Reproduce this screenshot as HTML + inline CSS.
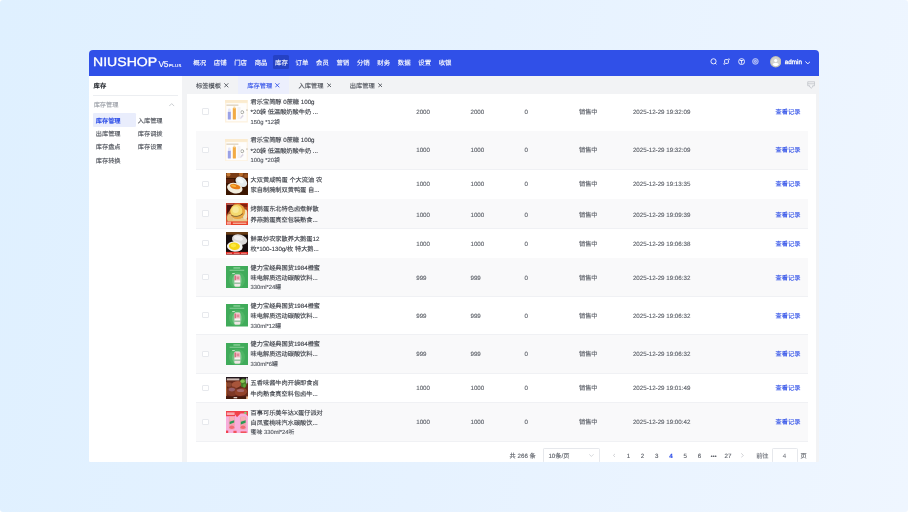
<!DOCTYPE html>
<html lang="zh-CN"><head><meta charset="utf-8"><title>库存管理</title>
<style>
*{box-sizing:border-box;margin:0;padding:0}
html,body{width:908px;height:512px;overflow:hidden}
body{background:#fff;font-family:"Liberation Sans","Noto Sans CJK SC",sans-serif;font-size:6.2px;color:#4b4f57;position:relative;-webkit-text-size-adjust:none;text-rendering:geometricPrecision}
.a{position:absolute;white-space:nowrap;line-height:10px}
div.a{padding-top:1.3px;-webkit-text-stroke:0.12px currentColor}
#app{will-change:transform;position:absolute;left:89px;top:50px;width:730px;height:411.8px;border-radius:4px 4px 1.5px 1.5px;overflow:hidden;background:#f2f3f5}
#hd{position:absolute;z-index:2;left:0;top:0;width:730px;height:25.75px;background:#3050e8}
#sb{position:absolute;left:0;top:25.6px;width:92.8px;height:387px;background:#fff}
#card{position:absolute;left:98.2px;top:44.15px;width:628.8px;height:368px;background:#fff}
.nav{color:#fff;font-size:6.4px;top:7.3px}
.tab{font-size:6.25px;top:30.5px;color:#4b4f57}
.x{font-size:6.6px}
.row{position:absolute;left:107.4px;width:611.2px}
.odd{background:#fff}.even{background:#f9f9fa}
.row:after{content:"";position:absolute;left:0;right:0;bottom:0;height:0.5px;background:#f0f1f4}
.cb{position:absolute;left:6.2px;width:6.4px;height:6.4px;border:0.5px solid #e7e9ed;border-radius:1px;background:#fff}
.th{position:absolute;left:29.6px}
.th svg{display:block}
.t{color:#3d4048}
.s{color:#50545c;font-size:5.85px}
.lk{color:#3050e8}
.m{color:#5c6068}
.pg{top:400.6px;color:#5c6068}
</style></head><body>
<div style="position:absolute;left:0;top:0;width:908px;height:512px;border-radius:3px;background:linear-gradient(100deg,#dff0ff 0%,#e6f2ff 50%,#eff6ff 100%)"></div>
<div id="app">
<div id="hd">
<div class="a" style="left:3.8px;top:3.4px;font-size:12.4px;line-height:14px;color:#fff;-webkit-text-stroke:0.3px #fff;transform:scaleX(1.136);transform-origin:0 50%">NIUSHOP</div>
<div class="a" style="left:69.4px;top:7.3px;font-size:8.5px;line-height:10px;color:#fff;letter-spacing:-0.4px">V5</div>
<div class="a" style="left:79.9px;top:11.3px;font-size:4.2px;line-height:5px;color:#fff;letter-spacing:0.45px;-webkit-text-stroke:0.15px #fff">PLUS</div>

<div class="a" style="left:183.8px;top:5.2px;width:16.6px;height:13.6px;background:#2541c4;border-radius:1.5px"></div>
<div class="a nav" style="left:104.30px">概况</div>
<div class="a nav" style="left:124.75px">店铺</div>
<div class="a nav" style="left:145.20px">门店</div>
<div class="a nav" style="left:165.65px">商品</div>
<div class="a nav" style="left:186.10px">库存</div>
<div class="a nav" style="left:206.55px">订单</div>
<div class="a nav" style="left:227.00px">会员</div>
<div class="a nav" style="left:247.45px">营销</div>
<div class="a nav" style="left:267.90px">分销</div>
<div class="a nav" style="left:288.35px">财务</div>
<div class="a nav" style="left:308.80px">数据</div>
<div class="a nav" style="left:329.25px">设置</div>
<div class="a nav" style="left:349.70px">收银</div>
<svg class="a" style="left:620.6px;top:8.1px" width="7.4" height="7.4" viewBox="0 0 16 16" fill="none" stroke="#fff" stroke-width="1.9"><circle cx="7.6" cy="7.2" r="5.6"/><path d="M11.8 11.6 L13.6 13.4" stroke-linecap="round"/></svg>
<svg class="a" style="left:634.4px;top:8.4px" width="7.2" height="7.2" viewBox="0 0 16 16" fill="none" stroke="#fff" stroke-width="2.2" opacity=".92"><rect x="3.6" y="3.6" width="8.4" height="8.4" rx="1.6"/><path d="M11.6 2 H14 V4.6 M4.4 14 H2 V11.4" stroke-width="1.8"/></svg>
<svg class="a" style="left:648.9px;top:8.1px" width="7.2" height="7.2" viewBox="0 0 16 16" fill="none" stroke="#fff" stroke-width="1.9"><circle cx="8" cy="8" r="6.6"/><path d="M5 5.6 H11 M8 5.6 V12" stroke-linecap="round"/></svg>
<svg class="a" style="left:663.4px;top:8.2px" width="6.8" height="6.8" viewBox="0 0 16 16" fill="rgba(255,255,255,.38)" stroke="#fff" stroke-width="1.6" opacity=".8"><circle cx="8" cy="8" r="6.8"/><circle cx="8" cy="8" r="2.2" fill="none"/></svg>
<svg class="a" style="left:680.9px;top:6.3px" width="11.4" height="11.4" viewBox="0 0 24 24"><circle cx="12" cy="12" r="12" fill="#c2c1b6"/><circle cx="12" cy="12" r="9.8" fill="#d2d2d0"/><circle cx="12" cy="9.6" r="3.3" fill="#fff"/><path d="M5.6 18.6 C6.2 15.6 8.8 14.2 12 14.2 S17.8 15.6 18.4 18.6 A9.8 9.8 0 0 1 5.6 18.6Z" fill="#fff"/></svg>
<div class="a" style="left:695.8px;top:7.2px;font-size:6.3px;color:#fff;-webkit-text-stroke:0.3px #fff">admin</div>
<svg class="a" style="left:715.8px;top:10.6px" width="5.6" height="3.6" viewBox="0 0 10 6" fill="none" stroke="#fff" stroke-width="1.7"><path d="M1 1 L5 5 L9 1" stroke-linecap="round" stroke-linejoin="round"/></svg>
</div>
<div id="sb">
<div class="a" style="left:4.6px;top:5.2px;font-size:6.3px;font-weight:bold;color:#1f2329">库存</div>
<div class="a" style="left:4.4px;top:19.6px;width:84.4px;height:0.6px;background:#eceef1"></div>
<div class="a" style="left:4.7px;top:24.2px;color:#9a9ea6">库存管理</div>
<svg class="a" style="left:80.4px;top:27.8px" width="5.4" height="3.4" viewBox="0 0 10 6" fill="none" stroke="#a7abb2" stroke-width="1.1"><path d="M1 5 L5 1 L9 5" stroke-linecap="round" stroke-linejoin="round"/></svg>
<div class="a" style="left:4.2px;top:37.9px;width:42.4px;height:13.2px;background:#e9edfc;border-radius:1.2px"></div>
<div class="a" style="left:6.8px;top:39.7px;font-weight:bold;color:#3050e8">库存管理</div>
<div class="a" style="left:48.8px;top:39.7px">入库管理</div>
<div class="a" style="left:6.8px;top:52.9px">出库管理</div>
<div class="a" style="left:48.8px;top:52.9px">库存调拨</div>
<div class="a" style="left:6.8px;top:66.1px">库存盘点</div>
<div class="a" style="left:48.8px;top:66.1px">库存设置</div>
<div class="a" style="left:6.8px;top:79.8px">库存转换</div>
</div>

<div id="card"></div>
<div class="row odd" style="top:42.90px;height:38.40px">
<div class="cb" style="left:5.9px;top:15.6px"></div>
<div class="th" style="left:28.9px;top:7.55px"><svg viewBox="0 0 22.8 22.6" width="22.8" height="22.6"><defs><filter id="bT10" x="-10%" y="-10%" width="120%" height="120%"><feGaussianBlur stdDeviation="0.35"/></filter><clipPath id="cT10"><rect width="22.8" height="22.6"/></clipPath></defs><g clip-path="url(#cT10)"><g filter="url(#bT10)"><rect x="-2" y="-2" width="27" height="27" fill="#fdf2df"/><rect x="-2" y="-2" width="27" height="4.8" fill="#fbebcf"/><rect x="1.3" y="3.2" width="20.4" height="18" fill="#fefdfc"/><rect x="1.4" y="4.7" width="12" height="0.8" fill="#c8b594"/><rect x="2.8" y="11.4" width="3" height="8.2" rx="0.5" fill="#9aa1e6"/><rect x="3" y="8.6" width="2.6" height="3.2" rx="1" fill="#e4e6f7"/><rect x="7.8" y="8" width="3.1" height="11.6" rx="0.5" fill="#f2ab45"/><rect x="8.2" y="6.6" width="2.3" height="2" rx="0.8" fill="#f8d9a4"/><circle cx="17.2" cy="12.2" r="1.5" fill="none" stroke="#94968f" stroke-width="0.8"/><path d="M15 18.8 L18.2 15.4" stroke="#dcd6e4" stroke-width="1.6"/><rect x="21.3" y="9.7" width="1.4" height="0.7" fill="#8f8268"/><rect x="12.5" y="7" width="3" height="12" fill="#f4f3f4"/></g></g></svg></div>
<div class="a t" style="left:54.2px;top:4.10px">君乐宝简醇 0蔗糖 100g</div>
<div class="a t" style="left:54.2px;top:14.10px">*20袋 低温酸奶酸牛奶 ...</div>
<div class="a s" style="left:54.2px;top:24.10px">150g *12袋</div>
<div class="a m" style="left:219.8px;top:14.10px">2000</div>
<div class="a m" style="left:274.1px;top:14.10px">2000</div>
<div class="a m" style="left:328.2px;top:14.10px">0</div>
<div class="a m" style="left:382.6px;top:14.10px">销售中</div>
<div class="a m" style="left:436.5px;top:14.10px">2025-12-29 19:32:09</div>
<div class="a lk" style="left:579.2px;top:14.10px">查看记录</div>
</div>
<div class="row even" style="top:81.30px;height:38.40px">
<div class="cb" style="left:5.9px;top:15.6px"></div>
<div class="th" style="left:28.9px;top:7.55px"><svg viewBox="0 0 22.8 22.6" width="22.8" height="22.6"><defs><filter id="bT11" x="-10%" y="-10%" width="120%" height="120%"><feGaussianBlur stdDeviation="0.35"/></filter><clipPath id="cT11"><rect width="22.8" height="22.6"/></clipPath></defs><g clip-path="url(#cT11)"><g filter="url(#bT11)"><rect x="-2" y="-2" width="27" height="27" fill="#fdf2df"/><rect x="-2" y="-2" width="27" height="4.8" fill="#fbebcf"/><rect x="1.3" y="3.2" width="20.4" height="18" fill="#fefdfc"/><rect x="1.4" y="4.7" width="12" height="0.8" fill="#c8b594"/><rect x="2.8" y="11.4" width="3" height="8.2" rx="0.5" fill="#9aa1e6"/><rect x="3" y="8.6" width="2.6" height="3.2" rx="1" fill="#e4e6f7"/><rect x="7.8" y="8" width="3.1" height="11.6" rx="0.5" fill="#f2ab45"/><rect x="8.2" y="6.6" width="2.3" height="2" rx="0.8" fill="#f8d9a4"/><circle cx="17.2" cy="12.2" r="1.5" fill="none" stroke="#94968f" stroke-width="0.8"/><path d="M15 18.8 L18.2 15.4" stroke="#dcd6e4" stroke-width="1.6"/><rect x="21.3" y="9.7" width="1.4" height="0.7" fill="#8f8268"/><rect x="12.5" y="7" width="3" height="12" fill="#f4f3f4"/></g></g></svg></div>
<div class="a t" style="left:54.2px;top:3.70px">君乐宝简醇 0蔗糖 100g</div>
<div class="a t" style="left:54.2px;top:14.70px">*20袋 低温酸奶酸牛奶 ...</div>
<div class="a s" style="left:54.2px;top:23.70px">100g *20袋</div>
<div class="a m" style="left:219.8px;top:13.70px">1000</div>
<div class="a m" style="left:274.1px;top:13.70px">1000</div>
<div class="a m" style="left:328.2px;top:13.70px">0</div>
<div class="a m" style="left:382.6px;top:13.70px">销售中</div>
<div class="a m" style="left:436.5px;top:13.70px">2025-12-29 19:32:09</div>
<div class="a lk" style="left:579.2px;top:13.70px">查看记录</div>
</div>
<div class="row odd" style="top:119.70px;height:29.40px">
<div class="cb" style="left:5.9px;top:11.1px"></div>
<div class="th" style="left:29.6px;top:3.35px"><svg viewBox="0 0 22 22" width="22" height="22"><defs><filter id="bT32" x="-10%" y="-10%" width="120%" height="120%"><feGaussianBlur stdDeviation="0.45"/></filter><clipPath id="cT32"><rect width="22" height="22"/></clipPath></defs><g clip-path="url(#cT32)"><g filter="url(#bT32)"><rect x="-2" y="-2" width="26" height="26" fill="#3a1406"/><rect x="-2" y="-2" width="26" height="7" fill="#7a3d17"/><circle cx="2.5" cy="1.5" r="2" fill="#c27a34"/><circle cx="15" cy="1" r="2.2" fill="#b86a28"/><circle cx="20" cy="3" r="2" fill="#9a5420"/><rect x="0" y="6" width="8" height="4" fill="#5a240c"/><ellipse cx="15.3" cy="8.8" rx="6.4" ry="4.5" transform="rotate(35 15.3 8.8)" fill="#e4ebec"/><ellipse cx="14.3" cy="7.6" rx="3.6" ry="2" transform="rotate(35 14.3 7.6)" fill="#f4f8f8"/><ellipse cx="8.8" cy="15.1" rx="7.9" ry="5.2" transform="rotate(14 8.8 15.1)" fill="#f2ecdc"/><ellipse cx="9.2" cy="13.6" rx="5.3" ry="2.5" transform="rotate(14 9.2 13.6)" fill="#e77b18"/><ellipse cx="7.6" cy="12.8" rx="2.6" ry="1.1" transform="rotate(14 7.6 12.8)" fill="#f6b236"/></g></g></svg></div>
<div class="a t" style="left:54.2px;top:5.30px">大双黄咸鸭蛋 个大流油 农</div>
<div class="a t" style="left:54.2px;top:15.30px">家自制腌制双黄鸭蛋 自...</div>
<div class="a m" style="left:219.8px;top:9.30px">1000</div>
<div class="a m" style="left:274.1px;top:9.30px">1000</div>
<div class="a m" style="left:328.2px;top:9.30px">0</div>
<div class="a m" style="left:382.6px;top:9.30px">销售中</div>
<div class="a m" style="left:436.5px;top:9.30px">2025-12-29 19:13:35</div>
<div class="a lk" style="left:579.2px;top:9.30px">查看记录</div>
</div>
<div class="row even" style="top:149.10px;height:29.90px">
<div class="cb" style="left:5.9px;top:11.4px"></div>
<div class="th" style="left:29.6px;top:3.60px"><svg viewBox="0 0 22 22" width="22" height="22"><defs><filter id="bT43" x="-10%" y="-10%" width="120%" height="120%"><feGaussianBlur stdDeviation="0.45"/></filter><clipPath id="cT43"><rect width="22" height="22"/></clipPath></defs><g clip-path="url(#cT43)"><g filter="url(#bT43)"><rect x="-2" y="-2" width="26" height="26" fill="#b06a34"/><path d="M-2 -2 H10 L0 13 H-2Z" fill="#4a0e07"/><rect x="14" y="-2" width="10" height="8" fill="#86200f"/><rect x="18" y="4" width="6" height="16" fill="#a4421c"/><ellipse cx="12" cy="17.5" rx="10" ry="3.6" fill="#e9c98c"/><ellipse cx="4" cy="15" rx="3" ry="4" fill="#e8c07c"/><ellipse cx="19.2" cy="11.5" rx="2.4" ry="5" fill="#efe2bc"/><circle cx="11.6" cy="8.6" r="7.5" fill="#e8a640"/><circle cx="10.4" cy="7.8" r="5.9" fill="#f4da70"/><circle cx="9.6" cy="6.8" r="3.2" fill="#f8e898"/><path d="M5.2 12.2 Q11 15.4 17 10.6" stroke="#7a5a30" stroke-width="0.9" fill="none"/></g><rect x="0.25" y="0.25" width="21.5" height="21.5" fill="none" stroke="#e8412a" stroke-width="0.7"/><rect x="0" y="18.4" width="22" height="3.6" fill="#e8412a"/><rect x="0.8" y="18.6" width="4.2" height="3" fill="#f5a093"/><rect x="6.8" y="19.6" width="13.6" height="1.3" fill="#f6b59c"/><rect x="0.6" y="0.7" width="7" height="0.9" fill="#ef8d7c"/></g></svg></div>
<div class="a t" style="left:54.2px;top:4.90px">烤鹅蛋东北特色卤煮鲜散</div>
<div class="a t" style="left:54.2px;top:15.90px">养燕鹅蛋真空包装熟食...</div>
<div class="a m" style="left:219.8px;top:10.90px">1000</div>
<div class="a m" style="left:274.1px;top:10.90px">1000</div>
<div class="a m" style="left:328.2px;top:10.90px">0</div>
<div class="a m" style="left:382.6px;top:10.90px">销售中</div>
<div class="a m" style="left:436.5px;top:10.90px">2025-12-29 19:09:39</div>
<div class="a lk" style="left:579.2px;top:10.90px">查看记录</div>
</div>
<div class="row odd" style="top:179.00px;height:29.30px">
<div class="cb" style="left:5.9px;top:11.1px"></div>
<div class="th" style="left:29.6px;top:3.00px"><svg viewBox="0 0 22 22.6" width="22" height="22.6"><defs><filter id="bT54" x="-10%" y="-10%" width="120%" height="120%"><feGaussianBlur stdDeviation="0.45"/></filter><clipPath id="cT54"><rect width="22" height="22.6"/></clipPath></defs><g clip-path="url(#cT54)"><g filter="url(#bT54)"><rect x="-2" y="-2" width="26" height="27" fill="#160b07"/><rect x="-2" y="-2" width="26" height="5" fill="#4e2a10"/><rect x="-2" y="0.4" width="26" height="1.2" fill="#7a4a20"/><ellipse cx="13.6" cy="7.6" rx="7.8" ry="5" transform="rotate(16 13.6 7.6)" fill="#dbd9d8"/><ellipse cx="12.4" cy="6.2" rx="4.6" ry="2.2" transform="rotate(16 12.4 6.2)" fill="#efeeee"/><ellipse cx="8.8" cy="14.6" rx="7.9" ry="5.1" transform="rotate(6 8.8 14.6)" fill="#f3f3f1"/><ellipse cx="8.4" cy="14.3" rx="5.5" ry="3.7" transform="rotate(6 8.4 14.3)" fill="#f5d714"/><ellipse cx="7.4" cy="13.6" rx="2.8" ry="1.8" fill="#fbe944"/></g><rect y="19.9" width="22" height="2.8" fill="#de1f19"/><rect x="0.8" y="20.8" width="5.2" height="0.9" fill="#f4a39b"/><rect x="7.8" y="20.8" width="5.8" height="0.9" fill="#f4a39b"/><rect x="15" y="20.8" width="5.8" height="0.9" fill="#f4a39b"/></g></svg></div>
<div class="a t" style="left:54.2px;top:5.00px">鲜果妙农家散养大鹅蛋12</div>
<div class="a t" style="left:54.2px;top:15.00px">枚*100-130g/枚 特大鹅...</div>
<div class="a m" style="left:219.8px;top:10.00px">1000</div>
<div class="a m" style="left:274.1px;top:10.00px">1000</div>
<div class="a m" style="left:328.2px;top:10.00px">0</div>
<div class="a m" style="left:382.6px;top:10.00px">销售中</div>
<div class="a m" style="left:436.5px;top:10.00px">2025-12-29 19:06:38</div>
<div class="a lk" style="left:579.2px;top:10.00px">查看记录</div>
</div>
<div class="row even" style="top:208.30px;height:38.30px">
<div class="cb" style="left:5.9px;top:15.6px"></div>
<div class="th" style="left:29.6px;top:7.50px"><svg viewBox="0 0 22 22.6" width="22" height="22.6"><defs><filter id="bT65" x="-10%" y="-10%" width="120%" height="120%"><feGaussianBlur stdDeviation="0.4"/></filter><clipPath id="cT65"><rect width="22" height="22.6"/></clipPath></defs><g clip-path="url(#cT65)"><g filter="url(#bT65)"><rect x="-2" y="-2" width="26" height="27" fill="#41ab5a"/><ellipse cx="11" cy="14" rx="8" ry="8" fill="#4fb566"/><ellipse cx="11" cy="14.5" rx="4.8" ry="6.6" fill="#72c584"/><rect x="7.4" y="1.3" width="6.8" height="1.3" fill="#8fd49d"/><rect x="3.6" y="3.8" width="14.6" height="0.8" fill="#9ad9a7"/><rect x="6.2" y="7.1" width="2.6" height="0.8" fill="#d4f0da"/><rect x="8.6" y="8.4" width="5.6" height="12.2" rx="1" fill="#f0e0e0"/><rect x="8.6" y="9.4" width="5.6" height="5.2" fill="#ecbcc4"/><rect x="8.6" y="9.6" width="1.3" height="4.8" fill="#d4677a"/><rect x="10.6" y="10.6" width="2.6" height="2.6" fill="#e08a98"/><rect x="8.6" y="14.6" width="5.6" height="2" fill="#f8f6f4"/><rect x="8.6" y="16.7" width="5.6" height="1" fill="#5aa870"/><rect x="8.6" y="17.8" width="5.6" height="2.5" fill="#f0e6e6"/></g></g></svg></div>
<div class="a t" style="left:54.2px;top:4.70px">健力宝经典国货1984橙蜜</div>
<div class="a t" style="left:54.2px;top:14.70px">味电解质运动碳酸饮料...</div>
<div class="a s" style="left:54.2px;top:23.70px">330ml*24罐</div>
<div class="a m" style="left:219.8px;top:14.70px">999</div>
<div class="a m" style="left:274.1px;top:14.70px">999</div>
<div class="a m" style="left:328.2px;top:14.70px">0</div>
<div class="a m" style="left:382.6px;top:14.70px">销售中</div>
<div class="a m" style="left:436.5px;top:14.70px">2025-12-29 19:06:32</div>
<div class="a lk" style="left:579.2px;top:14.70px">查看记录</div>
</div>
<div class="row odd" style="top:246.60px;height:38.30px">
<div class="cb" style="left:5.9px;top:15.5px"></div>
<div class="th" style="left:29.6px;top:7.50px"><svg viewBox="0 0 22 22.6" width="22" height="22.6"><defs><filter id="bT66" x="-10%" y="-10%" width="120%" height="120%"><feGaussianBlur stdDeviation="0.4"/></filter><clipPath id="cT66"><rect width="22" height="22.6"/></clipPath></defs><g clip-path="url(#cT66)"><g filter="url(#bT66)"><rect x="-2" y="-2" width="26" height="27" fill="#41ab5a"/><ellipse cx="11" cy="14" rx="8" ry="8" fill="#4fb566"/><ellipse cx="11" cy="14.5" rx="4.8" ry="6.6" fill="#72c584"/><rect x="7.4" y="1.3" width="6.8" height="1.3" fill="#8fd49d"/><rect x="3.6" y="3.8" width="14.6" height="0.8" fill="#9ad9a7"/><rect x="6.2" y="7.1" width="2.6" height="0.8" fill="#d4f0da"/><rect x="8.6" y="8.4" width="5.6" height="12.2" rx="1" fill="#f0e0e0"/><rect x="8.6" y="9.4" width="5.6" height="5.2" fill="#ecbcc4"/><rect x="8.6" y="9.6" width="1.3" height="4.8" fill="#d4677a"/><rect x="10.6" y="10.6" width="2.6" height="2.6" fill="#e08a98"/><rect x="8.6" y="14.6" width="5.6" height="2" fill="#f8f6f4"/><rect x="8.6" y="16.7" width="5.6" height="1" fill="#5aa870"/><rect x="8.6" y="17.8" width="5.6" height="2.5" fill="#f0e6e6"/></g></g></svg></div>
<div class="a t" style="left:54.2px;top:4.40px">健力宝经典国货1984橙蜜</div>
<div class="a t" style="left:54.2px;top:14.40px">味电解质运动碳酸饮料...</div>
<div class="a s" style="left:54.2px;top:24.40px">330ml*12罐</div>
<div class="a m" style="left:219.8px;top:14.40px">999</div>
<div class="a m" style="left:274.1px;top:14.40px">999</div>
<div class="a m" style="left:328.2px;top:14.40px">0</div>
<div class="a m" style="left:382.6px;top:14.40px">销售中</div>
<div class="a m" style="left:436.5px;top:14.40px">2025-12-29 19:06:32</div>
<div class="a lk" style="left:579.2px;top:14.40px">查看记录</div>
</div>
<div class="row even" style="top:284.90px;height:38.90px">
<div class="cb" style="left:5.9px;top:15.9px"></div>
<div class="th" style="left:29.6px;top:7.80px"><svg viewBox="0 0 22 22.6" width="22" height="22.6"><defs><filter id="bT67" x="-10%" y="-10%" width="120%" height="120%"><feGaussianBlur stdDeviation="0.4"/></filter><clipPath id="cT67"><rect width="22" height="22.6"/></clipPath></defs><g clip-path="url(#cT67)"><g filter="url(#bT67)"><rect x="-2" y="-2" width="26" height="27" fill="#41ab5a"/><ellipse cx="11" cy="14" rx="8" ry="8" fill="#4fb566"/><ellipse cx="11" cy="14.5" rx="4.8" ry="6.6" fill="#72c584"/><rect x="7.4" y="1.3" width="6.8" height="1.3" fill="#8fd49d"/><rect x="3.6" y="3.8" width="14.6" height="0.8" fill="#9ad9a7"/><rect x="6.2" y="7.1" width="2.6" height="0.8" fill="#d4f0da"/><rect x="8.6" y="8.4" width="5.6" height="12.2" rx="1" fill="#f0e0e0"/><rect x="8.6" y="9.4" width="5.6" height="5.2" fill="#ecbcc4"/><rect x="8.6" y="9.6" width="1.3" height="4.8" fill="#d4677a"/><rect x="10.6" y="10.6" width="2.6" height="2.6" fill="#e08a98"/><rect x="8.6" y="14.6" width="5.6" height="2" fill="#f8f6f4"/><rect x="8.6" y="16.7" width="5.6" height="1" fill="#5aa870"/><rect x="8.6" y="17.8" width="5.6" height="2.5" fill="#f0e6e6"/></g></g></svg></div>
<div class="a t" style="left:54.2px;top:4.10px">健力宝经典国货1984橙蜜</div>
<div class="a t" style="left:54.2px;top:14.10px">味电解质运动碳酸饮料...</div>
<div class="a s" style="left:54.2px;top:24.10px">330ml*6罐</div>
<div class="a m" style="left:219.8px;top:14.10px">999</div>
<div class="a m" style="left:274.1px;top:14.10px">999</div>
<div class="a m" style="left:328.2px;top:14.10px">0</div>
<div class="a m" style="left:382.6px;top:14.10px">销售中</div>
<div class="a m" style="left:436.5px;top:14.10px">2025-12-29 19:06:32</div>
<div class="a lk" style="left:579.2px;top:14.10px">查看记录</div>
</div>
<div class="row odd" style="top:323.80px;height:29.00px">
<div class="cb" style="left:5.9px;top:10.9px"></div>
<div class="th" style="left:29.6px;top:3.15px"><svg viewBox="0 0 22 22" width="22" height="22"><defs><filter id="bT98" x="-10%" y="-10%" width="120%" height="120%"><feGaussianBlur stdDeviation="0.5"/></filter><clipPath id="cT98"><rect width="22" height="22"/></clipPath></defs><g clip-path="url(#cT98)"><g filter="url(#bT98)"><rect x="-2" y="-2" width="26" height="26" fill="#65291a"/><rect x="-2" y="-2" width="26" height="5" fill="#21171c"/><rect x="0.8" y="1.4" width="12.6" height="2" fill="#cdbab4"/><ellipse cx="17.4" cy="6" rx="3.4" ry="4.4" fill="#4a7a2a"/><ellipse cx="16.6" cy="4.2" rx="2.2" ry="1.7" fill="#86c552"/><ellipse cx="18.4" cy="8.8" rx="1.4" ry="2" fill="#5aa032"/><ellipse cx="20.8" cy="3.6" rx="1" ry="3.2" fill="#c4b4c4"/><ellipse cx="10.4" cy="7.6" rx="4.8" ry="3.2" transform="rotate(-18 10.4 7.6)" fill="#a8553a"/><ellipse cx="3" cy="7.6" rx="3" ry="2.4" fill="#8a4630"/><ellipse cx="6" cy="14.4" rx="5.8" ry="4.8" fill="#7e3826"/><ellipse cx="5.8" cy="12.6" rx="3.2" ry="1.8" fill="#96606a"/><ellipse cx="15" cy="15" rx="6.2" ry="3.8" transform="rotate(-10 15 15)" fill="#92422c"/><ellipse cx="14.6" cy="13.4" rx="3.6" ry="1.5" fill="#a86a6c"/><rect x="-2" y="19.4" width="26" height="4" fill="#451a0e"/><rect x="7.6" y="20" width="3.6" height="1.4" fill="#dccdc4"/><rect x="20.2" y="19.4" width="3" height="3" fill="#ecbc94"/><rect x="-1" y="5" width="1.8" height="14" fill="#b8683a"/></g></g></svg></div>
<div class="a t" style="left:54.2px;top:4.20px">五香味酱牛肉开袋即食卤</div>
<div class="a t" style="left:54.2px;top:15.20px">牛肉熟食真空料包卤牛...</div>
<div class="a m" style="left:219.8px;top:9.20px">1000</div>
<div class="a m" style="left:274.1px;top:9.20px">1000</div>
<div class="a m" style="left:328.2px;top:9.20px">0</div>
<div class="a m" style="left:382.6px;top:9.20px">销售中</div>
<div class="a m" style="left:436.5px;top:9.20px">2025-12-29 19:01:49</div>
<div class="a lk" style="left:579.2px;top:9.20px">查看记录</div>
</div>
<div class="row even" style="top:352.80px;height:39.00px">
<div class="cb" style="left:5.9px;top:15.9px"></div>
<div class="th" style="left:29.6px;top:8.05px"><svg viewBox="0 0 22 22.2" width="22" height="22.2"><defs><filter id="bT109" x="-10%" y="-10%" width="120%" height="120%"><feGaussianBlur stdDeviation="0.4"/></filter><clipPath id="cT109"><rect width="22" height="22.2"/></clipPath></defs><g clip-path="url(#cT109)"><g filter="url(#bT109)"><rect x="-2" y="-2" width="26" height="27" fill="#f7aedb"/><path d="M-2 -2 H24 V7.4 L19.4 2.6 H14.6 L11 6.2 L9 3.6 V5.2 H-2Z" fill="#f1434b"/><rect x="0.8" y="1.4" width="7.8" height="2.6" fill="#f8aab0"/><circle cx="19.4" cy="2" r="1.3" fill="#8cc878"/><rect x="2.8" y="5.6" width="6" height="13" rx="1.4" fill="#f4a0b2"/><rect x="14" y="5.6" width="6.2" height="13" rx="1.4" fill="#f4a0b2"/><rect x="3.6" y="6" width="4.4" height="3" fill="#f6b0b4"/><rect x="15" y="6" width="4.4" height="3" fill="#f6b0b4"/><path d="M3.6 10.8 L8.2 9.2 V11.6 L3.6 13.2Z" fill="#2a9a55"/><path d="M14.8 10.8 L19.6 9.2 V11.8 L14.8 13.4Z" fill="#2a9a55"/><ellipse cx="5.8" cy="16.2" rx="2.4" ry="1.8" fill="#f26a74"/><ellipse cx="17" cy="16.2" rx="2.4" ry="1.8" fill="#f26a74"/><rect x="-1" y="19.6" width="3.2" height="4" fill="#f1434b"/><rect x="7.4" y="19.8" width="3.2" height="4" fill="#f2535c"/><rect x="14.6" y="20.4" width="6" height="3" fill="#f2535c"/></g></g></svg></div>
<div class="a t" style="left:54.2px;top:5.20px">百事可乐美年达X蛋仔派对</div>
<div class="a t" style="left:54.2px;top:15.20px">白凤蜜桃味汽水碳酸饮...</div>
<div class="a s" style="left:54.2px;top:24.20px">蜜味 330ml*24听</div>
<div class="a m" style="left:219.8px;top:14.20px">1000</div>
<div class="a m" style="left:274.1px;top:14.20px">1000</div>
<div class="a m" style="left:328.2px;top:14.20px">0</div>
<div class="a m" style="left:382.6px;top:14.20px">销售中</div>
<div class="a m" style="left:436.5px;top:14.20px">2025-12-29 19:00:42</div>
<div class="a lk" style="left:579.2px;top:14.20px">查看记录</div>
</div>
<div style="position:absolute;left:92.8px;top:25.75px;width:640px;height:18.4px;background:#f2f3f5"></div>
<div class="a" style="left:149.2px;top:25.6px;width:51.2px;height:18.4px;background:#eceffd"></div>
<div class="a tab" style="left:107.1px;color:#4b4f57">标签模板</div>
<svg class="a" style="left:135.2px;top:33.4px" width="4.6" height="4.6" viewBox="0 0 8 8" fill="none" stroke="#4b4f57" stroke-width="1.5"><path d="M1 1 L7 7 M7 1 L1 7" stroke-linecap="round"/></svg>
<div class="a tab" style="left:158.3px;color:#3050e8">库存管理</div>
<svg class="a" style="left:186.4px;top:33.4px" width="4.6" height="4.6" viewBox="0 0 8 8" fill="none" stroke="#3050e8" stroke-width="1.5"><path d="M1 1 L7 7 M7 1 L1 7" stroke-linecap="round"/></svg>
<div class="a tab" style="left:209.5px;color:#4b4f57">入库管理</div>
<svg class="a" style="left:237.6px;top:33.4px" width="4.6" height="4.6" viewBox="0 0 8 8" fill="none" stroke="#4b4f57" stroke-width="1.5"><path d="M1 1 L7 7 M7 1 L1 7" stroke-linecap="round"/></svg>
<div class="a tab" style="left:260.7px;color:#4b4f57">出库管理</div>
<svg class="a" style="left:288.8px;top:33.4px" width="4.6" height="4.6" viewBox="0 0 8 8" fill="none" stroke="#4b4f57" stroke-width="1.5"><path d="M1 1 L7 7 M7 1 L1 7" stroke-linecap="round"/></svg>
<svg class="a" style="left:717.6px;top:31.2px" width="8.4" height="8" viewBox="0 0 17 16" fill="none" stroke="#b5b8bf" stroke-width="1.3"><path d="M1.5 1.5 H15.5 V9.5 H11.5 V12 L8.5 14.5 L5.5 12 V9.5 H1.5Z" stroke-linejoin="round"/><path d="M1.5 5.5 H15.5"/></svg>
<div class="a pg" style="left:420.6px">共 266 条</div>
<div class="a" style="left:454.2px;top:398.4px;width:56.6px;height:14.4px;border:0.5px solid #e6e8ec;border-radius:1.2px;background:#fff"></div>
<div class="a pg" style="left:459.4px">10条/页</div>
<svg class="a" style="left:500.2px;top:404.2px" width="4.8" height="3" viewBox="0 0 10 6" fill="none" stroke="#b3b6bd" stroke-width="1.1"><path d="M1 1 L5 5 L9 1" stroke-linecap="round" stroke-linejoin="round"/></svg>
<svg class="a" style="left:523.6px;top:403.2px" width="2.8" height="4.8" viewBox="0 0 6 10" fill="none" stroke="#a4a7ae" stroke-width="1.1"><path d="M5 1 L1 5 L5 9" stroke-linecap="round" stroke-linejoin="round"/></svg>
<div class="a pg" style="left:529.4px;width:20px;text-align:center;">1</div>
<div class="a pg" style="left:543.6px;width:20px;text-align:center;">2</div>
<div class="a pg" style="left:557.8px;width:20px;text-align:center;">3</div>
<div class="a pg" style="left:572.0px;width:20px;text-align:center;color:#3050e8;font-weight:bold;">4</div>
<div class="a pg" style="left:586.2px;width:20px;text-align:center;">5</div>
<div class="a pg" style="left:600.4px;width:20px;text-align:center;">6</div>
<div class="a pg" style="left:614.8px;width:20px;text-align:center;letter-spacing:0.2px;font-weight:bold;font-size:5px">•••</div>
<div class="a pg" style="left:629px;width:20px;text-align:center">27</div>
<svg class="a" style="left:651.8px;top:403.2px" width="2.8" height="4.8" viewBox="0 0 6 10" fill="none" stroke="#a4a7ae" stroke-width="1.1"><path d="M1 1 L5 5 L1 9" stroke-linecap="round" stroke-linejoin="round"/></svg>
<div class="a pg" style="left:667.2px;color:#73777f">前往</div>
<div class="a" style="left:683.2px;top:398.4px;width:25.4px;height:14.4px;border:0.5px solid #e6e8ec;border-radius:1.2px;background:#fff"></div>
<div class="a pg" style="left:685.4px;width:20px;text-align:center;color:#8a8d94">4</div>
<div class="a pg" style="left:711.4px">页</div>
</div>
</body></html>
